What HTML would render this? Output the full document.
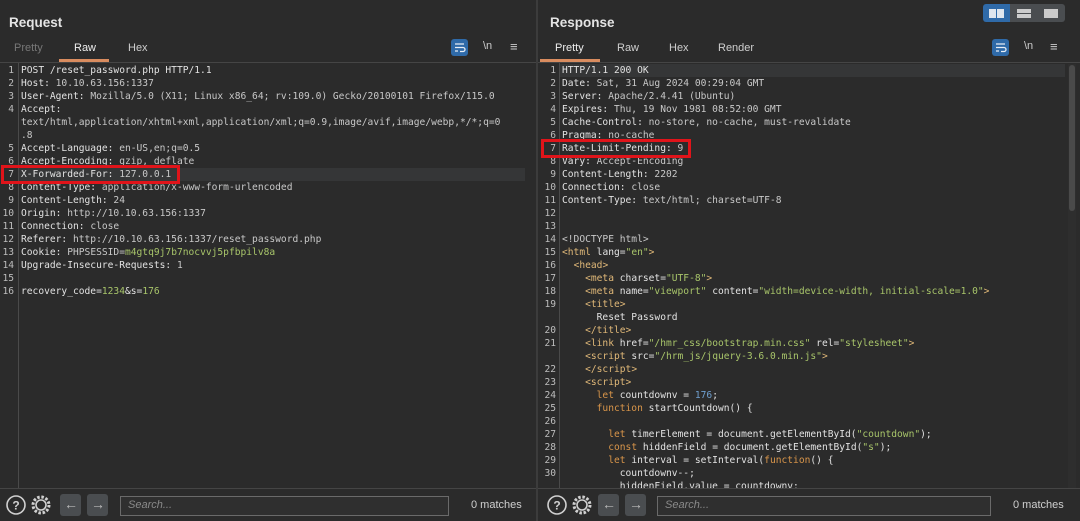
<!DOCTYPE html>
<html><head><meta charset="utf-8"><style>
*{margin:0;padding:0;box-sizing:border-box}
body{width:1080px;height:521px;background:#2b2b2b;position:relative;overflow:hidden;font-family:"Liberation Sans","DejaVu Sans",sans-serif;color:#e4e4e4}
.abs{position:absolute}
.title{font-weight:bold;font-size:13.5px;top:15px}
.tab{font-size:11px;top:42px;color:#cfcfcf}
.code{font-family:"DejaVu Sans Mono","Liberation Mono",monospace;font-size:9.6px;line-height:13px;white-space:pre;color:#e2e2e2}
.ln{font-family:"DejaVu Sans Mono","Liberation Mono",monospace;font-size:9.6px;line-height:13px;white-space:pre;color:#bdbdbd;text-align:right}
.v{color:#c8c8c8}.g{color:#a8c56a}.b{color:#6f9fcf}.o{color:#d8954a}.t{color:#e0b878}
.btn{background:#4a4d50;border-radius:3px;width:21px;height:22px;top:494px}
.search{top:496px;height:20px;border:1px solid #6a6a6a;background:#2f2f2f;font-size:11px;font-style:italic;color:#8a8a8a;padding:2px 7px}
.m{top:499px;font-size:11px;color:#cfcfcf}
</style></head><body>
<!-- dividers -->
<div class="abs" style="left:536px;top:0;width:2px;height:521px;background:#3c3c3c"></div>
<div class="abs" style="left:0;top:62px;width:536px;height:1px;background:#454545"></div>
<div class="abs" style="left:538px;top:62px;width:542px;height:1px;background:#454545"></div>
<div class="abs" style="left:0;top:488px;width:536px;height:1px;background:#454545"></div>
<div class="abs" style="left:538px;top:488px;width:542px;height:1px;background:#454545"></div>
<div class="abs" style="left:18px;top:63px;width:1px;height:425px;background:#4a4a4a"></div>
<div class="abs" style="left:559px;top:63px;width:1px;height:425px;background:#4a4a4a"></div>

<div class="abs title" style="left:9px">Request</div>
<div class="abs title" style="left:550px">Response</div>
<div class="abs tab" style="left:14px;color:#777">Pretty</div>
<div class="abs tab" style="left:74px;color:#eee">Raw</div>
<div class="abs tab" style="left:128px">Hex</div>
<div class="abs" style="left:59px;top:59px;width:50px;height:3px;background:#d98c5f"></div>
<div class="abs tab" style="left:555px;color:#eee">Pretty</div>
<div class="abs tab" style="left:617px">Raw</div>
<div class="abs tab" style="left:669px">Hex</div>
<div class="abs tab" style="left:718px">Render</div>
<div class="abs" style="left:540px;top:59px;width:60px;height:3px;background:#d98c5f"></div>

<!-- toolbar icons -->
<div class="abs" style="left:451px;top:39px;width:17px;height:17px;background:#2f6aa8;border-radius:3px"></div>
<svg class="abs" style="left:451px;top:39px" width="17" height="17"><path d="M4 5h9M4 8.5h8a2 2 0 0 1 0 4h-3M4 12h3" stroke="#e8eef5" stroke-width="1.3" fill="none"/></svg>
<div class="abs" style="left:483px;top:40px;font-size:11px;color:#ccc">\n</div>
<div class="abs" style="left:510px;top:39px;font-size:13px;color:#ccc">≡</div>
<div class="abs" style="left:992px;top:39px;width:17px;height:17px;background:#2f6aa8;border-radius:3px"></div>
<svg class="abs" style="left:992px;top:39px" width="17" height="17"><path d="M4 5h9M4 8.5h8a2 2 0 0 1 0 4h-3M4 12h3" stroke="#e8eef5" stroke-width="1.3" fill="none"/></svg>
<div class="abs" style="left:1024px;top:40px;font-size:11px;color:#ccc">\n</div>
<div class="abs" style="left:1050px;top:39px;font-size:13px;color:#ccc">≡</div>

<!-- layout buttons -->
<div class="abs" style="left:983px;top:4px;width:27px;height:18px;background:#2f6aa8;border-radius:3px 0 0 3px"></div>
<div class="abs" style="left:1010px;top:4px;width:27px;height:18px;background:#4a4d50"></div>
<div class="abs" style="left:1037px;top:4px;width:28px;height:18px;background:#4a4d50;border-radius:0 3px 3px 0"></div>
<div class="abs" style="left:989px;top:9px;width:7px;height:9px;background:#dfe6ee"></div>
<div class="abs" style="left:997px;top:9px;width:7px;height:9px;background:#dfe6ee"></div>
<div class="abs" style="left:1017px;top:9px;width:14px;height:4px;background:#ccc"></div>
<div class="abs" style="left:1017px;top:14px;width:14px;height:4px;background:#ccc"></div>
<div class="abs" style="left:1044px;top:9px;width:14px;height:9px;background:#ccc"></div>

<!-- highlights -->
<div class="abs" style="left:19px;top:168px;width:506px;height:13px;background:#353637"></div>
<div class="abs" style="left:560px;top:64px;width:505px;height:13px;background:#353637"></div>
<div class="abs" style="left:1068px;top:64px;width:8px;height:424px;background:#2e2e2e"></div>
<div class="abs" style="left:1069px;top:65px;width:6px;height:146px;background:#4a4a4a;border-radius:3px"></div>

<!-- request -->
<div class="abs ln" style="left:0;top:64px;width:14px">1
2
3
4


5
6
7
8
9
10
11
12
13
14
15
16</div>
<div class="abs code" style="left:21px;top:64px">POST /reset_password.php HTTP/1.1
Host: <span class="v">10.10.63.156:1337</span>
User-Agent: <span class="v">Mozilla/5.0 (X11; Linux x86_64; rv:109.0) Gecko/20100101 Firefox/115.0</span>
Accept: 
<span class="v">text/html,application/xhtml+xml,application/xml;q=0.9,image/avif,image/webp,*/*;q=0</span>
<span class="v">.8</span>
Accept-Language: <span class="v">en-US,en;q=0.5</span>
Accept-Encoding: <span class="v">gzip, deflate</span>
X-Forwarded-For: <span class="v">127.0.0.1</span>
Content-Type: <span class="v">application/x-www-form-urlencoded</span>
Content-Length: <span class="v">24</span>
Origin: <span class="v">http://10.10.63.156:1337</span>
Connection: <span class="v">close</span>
Referer: <span class="v">http://10.10.63.156:1337/reset_password.php</span>
Cookie: <span class="v">PHPSESSID=</span><span class="g">m4gtq9j7b7nocvvj5pfbpilv8a</span>
Upgrade-Insecure-Requests: <span class="v">1</span>

recovery_code=<span class="g">1234</span>&amp;s=<span class="g">176</span></div>
<div class="abs" style="left:1px;top:165px;width:179px;height:19px;border:3px solid #e0141a"></div>

<!-- response -->
<div class="abs ln" style="left:538px;top:64px;width:18px">1
2
3
4
5
6
7
8
9
10
11
12
13
14
15
16
17
18
19

20
21

22
23
24
25
26
27
28
29
30</div>
<div class="abs code" style="left:562px;top:64px;height:424px;overflow:hidden">HTTP/1.1 200 OK
Date: <span class="v">Sat, 31 Aug 2024 00:29:04 GMT</span>
Server: <span class="v">Apache/2.4.41 (Ubuntu)</span>
Expires: <span class="v">Thu, 19 Nov 1981 08:52:00 GMT</span>
Cache-Control: <span class="v">no-store, no-cache, must-revalidate</span>
Pragma: <span class="v">no-cache</span>
Rate-Limit-Pending: <span class="v">9</span>
Vary: <span class="v">Accept-Encoding</span>
Content-Length: <span class="v">2202</span>
Connection: <span class="v">close</span>
Content-Type: <span class="v">text/html; charset=UTF-8</span>


<span class="v">&lt;!DOCTYPE html&gt;</span>
<span class="t">&lt;html</span> lang=<span class="g">"en"</span><span class="t">&gt;</span>
  <span class="t">&lt;head&gt;</span>
    <span class="t">&lt;meta</span> charset=<span class="g">"UTF-8"</span><span class="t">&gt;</span>
    <span class="t">&lt;meta</span> name=<span class="g">"viewport"</span> content=<span class="g">"width=device-width, initial-scale=1.0"</span><span class="t">&gt;</span>
    <span class="t">&lt;title&gt;</span>
      Reset Password
    <span class="t">&lt;/title&gt;</span>
    <span class="t">&lt;link</span> href=<span class="g">"/hmr_css/bootstrap.min.css"</span> rel=<span class="g">"stylesheet"</span><span class="t">&gt;</span>
    <span class="t">&lt;script</span> src=<span class="g">"/hrm_js/jquery-3.6.0.min.js"</span><span class="t">&gt;</span>
    <span class="t">&lt;/script&gt;</span>
    <span class="t">&lt;script&gt;</span>
      <span class="o">let</span> countdownv = <span class="b">176</span>;
      <span class="o">function</span> startCountdown() {

        <span class="o">let</span> timerElement = document.getElementById(<span class="g">"countdown"</span>);
        <span class="o">const</span> hiddenField = document.getElementById(<span class="g">"s"</span>);
        <span class="o">let</span> interval = setInterval(<span class="o">function</span>() {
          countdownv--;
          hiddenField.value = countdownv;</div>
<div class="abs" style="left:541px;top:139px;width:150px;height:19px;border:3px solid #e0141a"></div>

<!-- bottom bars -->
<svg class="abs" style="left:5px;top:494px" width="50" height="22"><circle cx="11" cy="11" r="9" stroke="#d0d0d0" stroke-width="1.6" fill="none"/><text x="11" y="15.5" font-size="12" font-family="Liberation Sans" fill="#d0d0d0" text-anchor="middle" font-weight="bold">?</text><circle cx="36" cy="11" r="5" stroke="#d0d0d0" stroke-width="1.6" fill="none"/><circle cx="36" cy="11" r="8" stroke="#d0d0d0" stroke-width="3" fill="none" stroke-dasharray="2.5 1.7"/></svg>
<div class="abs btn" style="left:60px"></div><div class="abs btn" style="left:87px"></div>
<div class="abs" style="left:64px;top:496px;font-size:14px;color:#bbb">←</div>
<div class="abs" style="left:91px;top:496px;font-size:14px;color:#bbb">→</div>
<div class="abs search" style="left:120px;width:329px">Search...</div>
<div class="abs m" style="left:471px">0 matches</div>

<svg class="abs" style="left:546px;top:494px" width="50" height="22"><circle cx="11" cy="11" r="9" stroke="#d0d0d0" stroke-width="1.6" fill="none"/><text x="11" y="15.5" font-size="12" font-family="Liberation Sans" fill="#d0d0d0" text-anchor="middle" font-weight="bold">?</text><circle cx="36" cy="11" r="5" stroke="#d0d0d0" stroke-width="1.6" fill="none"/><circle cx="36" cy="11" r="8" stroke="#d0d0d0" stroke-width="3" fill="none" stroke-dasharray="2.5 1.7"/></svg>
<div class="abs btn" style="left:598px"></div><div class="abs btn" style="left:625px"></div>
<div class="abs" style="left:602px;top:496px;font-size:14px;color:#bbb">←</div>
<div class="abs" style="left:629px;top:496px;font-size:14px;color:#bbb">→</div>
<div class="abs search" style="left:657px;width:334px">Search...</div>
<div class="abs m" style="left:1013px">0 matches</div>
</body></html>
